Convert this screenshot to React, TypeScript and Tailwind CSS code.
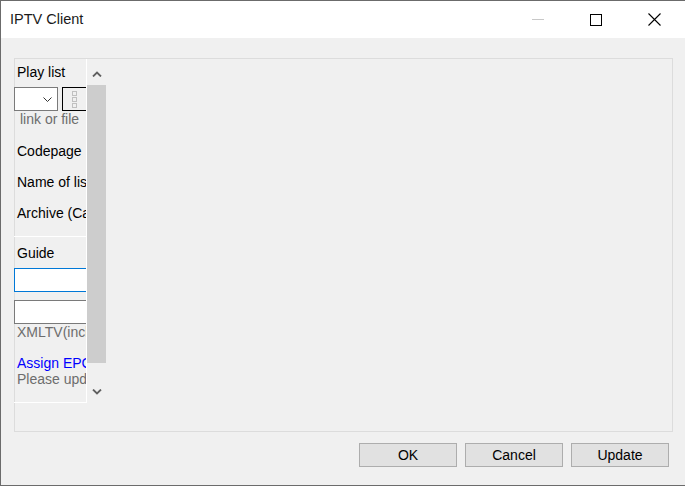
import React from "react";

const font = { fontFamily: '"Liberation Sans", Arial, sans-serif' };

function Chevron({ dir, className }: { dir: "up" | "down"; className?: string }) {
  return (
    <svg width="10" height="6" viewBox="0 0 10 6" className={className}>
      {dir === "up" ? (
        <path d="M1 5.5 L5 1.5 L9 5.5" fill="none" stroke="#606060" strokeWidth="1.8" />
      ) : (
        <path d="M1 0.5 L5 4.5 L9 0.5" fill="none" stroke="#606060" strokeWidth="1.8" />
      )}
    </svg>
  );
}

export default function App() {
  return (
    <div
      className="w-[685px] h-[486px] flex flex-col border-l border-t border-b border-[#6b6b6b] bg-[#f0f0f0] overflow-hidden text-black"
      style={font}
    >
      {/* Title bar */}
      <div className="h-[37px] bg-white flex items-center shrink-0">
        <div className="pl-[9px] text-[14.5px] text-[#1a1a1a] flex-1">IPTV Client</div>
        <div className="flex items-center h-full">
          <div className="w-[58px] h-full flex items-center justify-center">
            <div className="w-[12px] h-px bg-[#c8c8c8]" />
          </div>
          <div className="w-[58px] h-full flex items-center justify-center">
            <div className="w-[12px] h-[12px] border border-black" />
          </div>
          <div className="w-[58px] h-full flex items-center justify-center mr-[2px]">
            <svg width="13" height="13" viewBox="0 0 13 13">
              <path d="M0.5 0.5 L12.5 12.5 M12.5 0.5 L0.5 12.5" stroke="#000" strokeWidth="1.1" />
            </svg>
          </div>
        </div>
      </div>

      {/* Body */}
      <div className="flex-1 flex flex-col pl-[13px] pt-[20px]">
        <div className="w-[659px] h-[374px] border border-[#dcdcdc] flex">
          {/* scroll panel */}
          <div className="-ml-px h-[344px] flex">
            <div className="w-[73px] h-full border-r border-b border-white overflow-hidden flex flex-col text-[14px] leading-[18px] whitespace-nowrap">
              <div className="mt-[4px] h-[18px] pl-[3px]">Play list</div>
              <div className="mt-[6px] h-[24px] flex w-[100px]">
                <div className="w-[44px] h-[24px] bg-white border border-[#7a7a7a] flex items-center justify-end pr-[5px]">
                  <svg width="9" height="5" viewBox="0 0 9 5">
                    <path d="M0.5 0.5 L4.5 4.5 L8.5 0.5" fill="none" stroke="#333" strokeWidth="1" />
                  </svg>
                </div>
                <div className="ml-[4px] w-[26px] h-[24px] border border-black bg-[#f0f0f0] flex flex-col items-center justify-center gap-[1px] pr-[1px]">
                  <div className="w-[5px] h-[5px] border border-[#c0c0c0]" />
                  <div className="w-[5px] h-[5px] border border-[#c0c0c0]" />
                  <div className="w-[5px] h-[5px] border border-[#c0c0c0]" />
                </div>
              </div>
              <div className="h-[16px] leading-[16px] pl-[6px] text-[#6d6d6d]">link or file</div>
              <div className="mt-[15px] h-[18px] pl-[3px]">Codepage</div>
              <div className="mt-[13px] h-[18px] pl-[3px]">Name of list</div>
              <div className="mt-[13px] h-[18px] pl-[3px]">Archive (Catchup)</div>
              <div className="mt-[14px] h-px bg-white" />
              <div className="mt-[7px] h-[18px] pl-[3px]">Guide</div>
              <div className="mt-[6px] h-[24px] w-[100px] bg-white border border-[#0078d7]" />
              <div className="mt-[8px] h-[24px] w-[100px] bg-white border border-[#7a7a7a]" />
              <div className="h-[16px] leading-[16px] pl-[3px] text-[#6d6d6d]">XMLTV(include)</div>
              <div className="mt-[15px] h-[16px] leading-[16px] pl-[3px] text-[#0000ff]">Assign EPG</div>
              <div className="h-[16px] leading-[16px] pl-[3px] text-[#6d6d6d]">Please update</div>
            </div>
            {/* scrollbar */}
            <div className="w-[20px] h-full flex flex-col items-center">
              <div className="h-[26px] w-full flex items-center justify-center pt-[3px]">
                <Chevron dir="up" />
              </div>
              <div className="w-[19px] self-start h-[278px] bg-[#cdcdcd]" />
              <div className="flex-1 w-full flex justify-center pt-[26px]">
                <Chevron dir="down" />
              </div>
            </div>
          </div>
        </div>

        {/* buttons */}
        <div className="w-[655px] mt-[11px] flex justify-end gap-[8px] text-[14px]">
          <button className="w-[98px] h-[24px] bg-[#e1e1e1] border border-[#adadad] flex items-center justify-center">
            OK
          </button>
          <button className="w-[98px] h-[24px] bg-[#e1e1e1] border border-[#adadad] flex items-center justify-center">
            Cancel
          </button>
          <button className="w-[98px] h-[24px] bg-[#e1e1e1] border border-[#adadad] flex items-center justify-center">
            Update
          </button>
        </div>
      </div>
    </div>
  );
}
